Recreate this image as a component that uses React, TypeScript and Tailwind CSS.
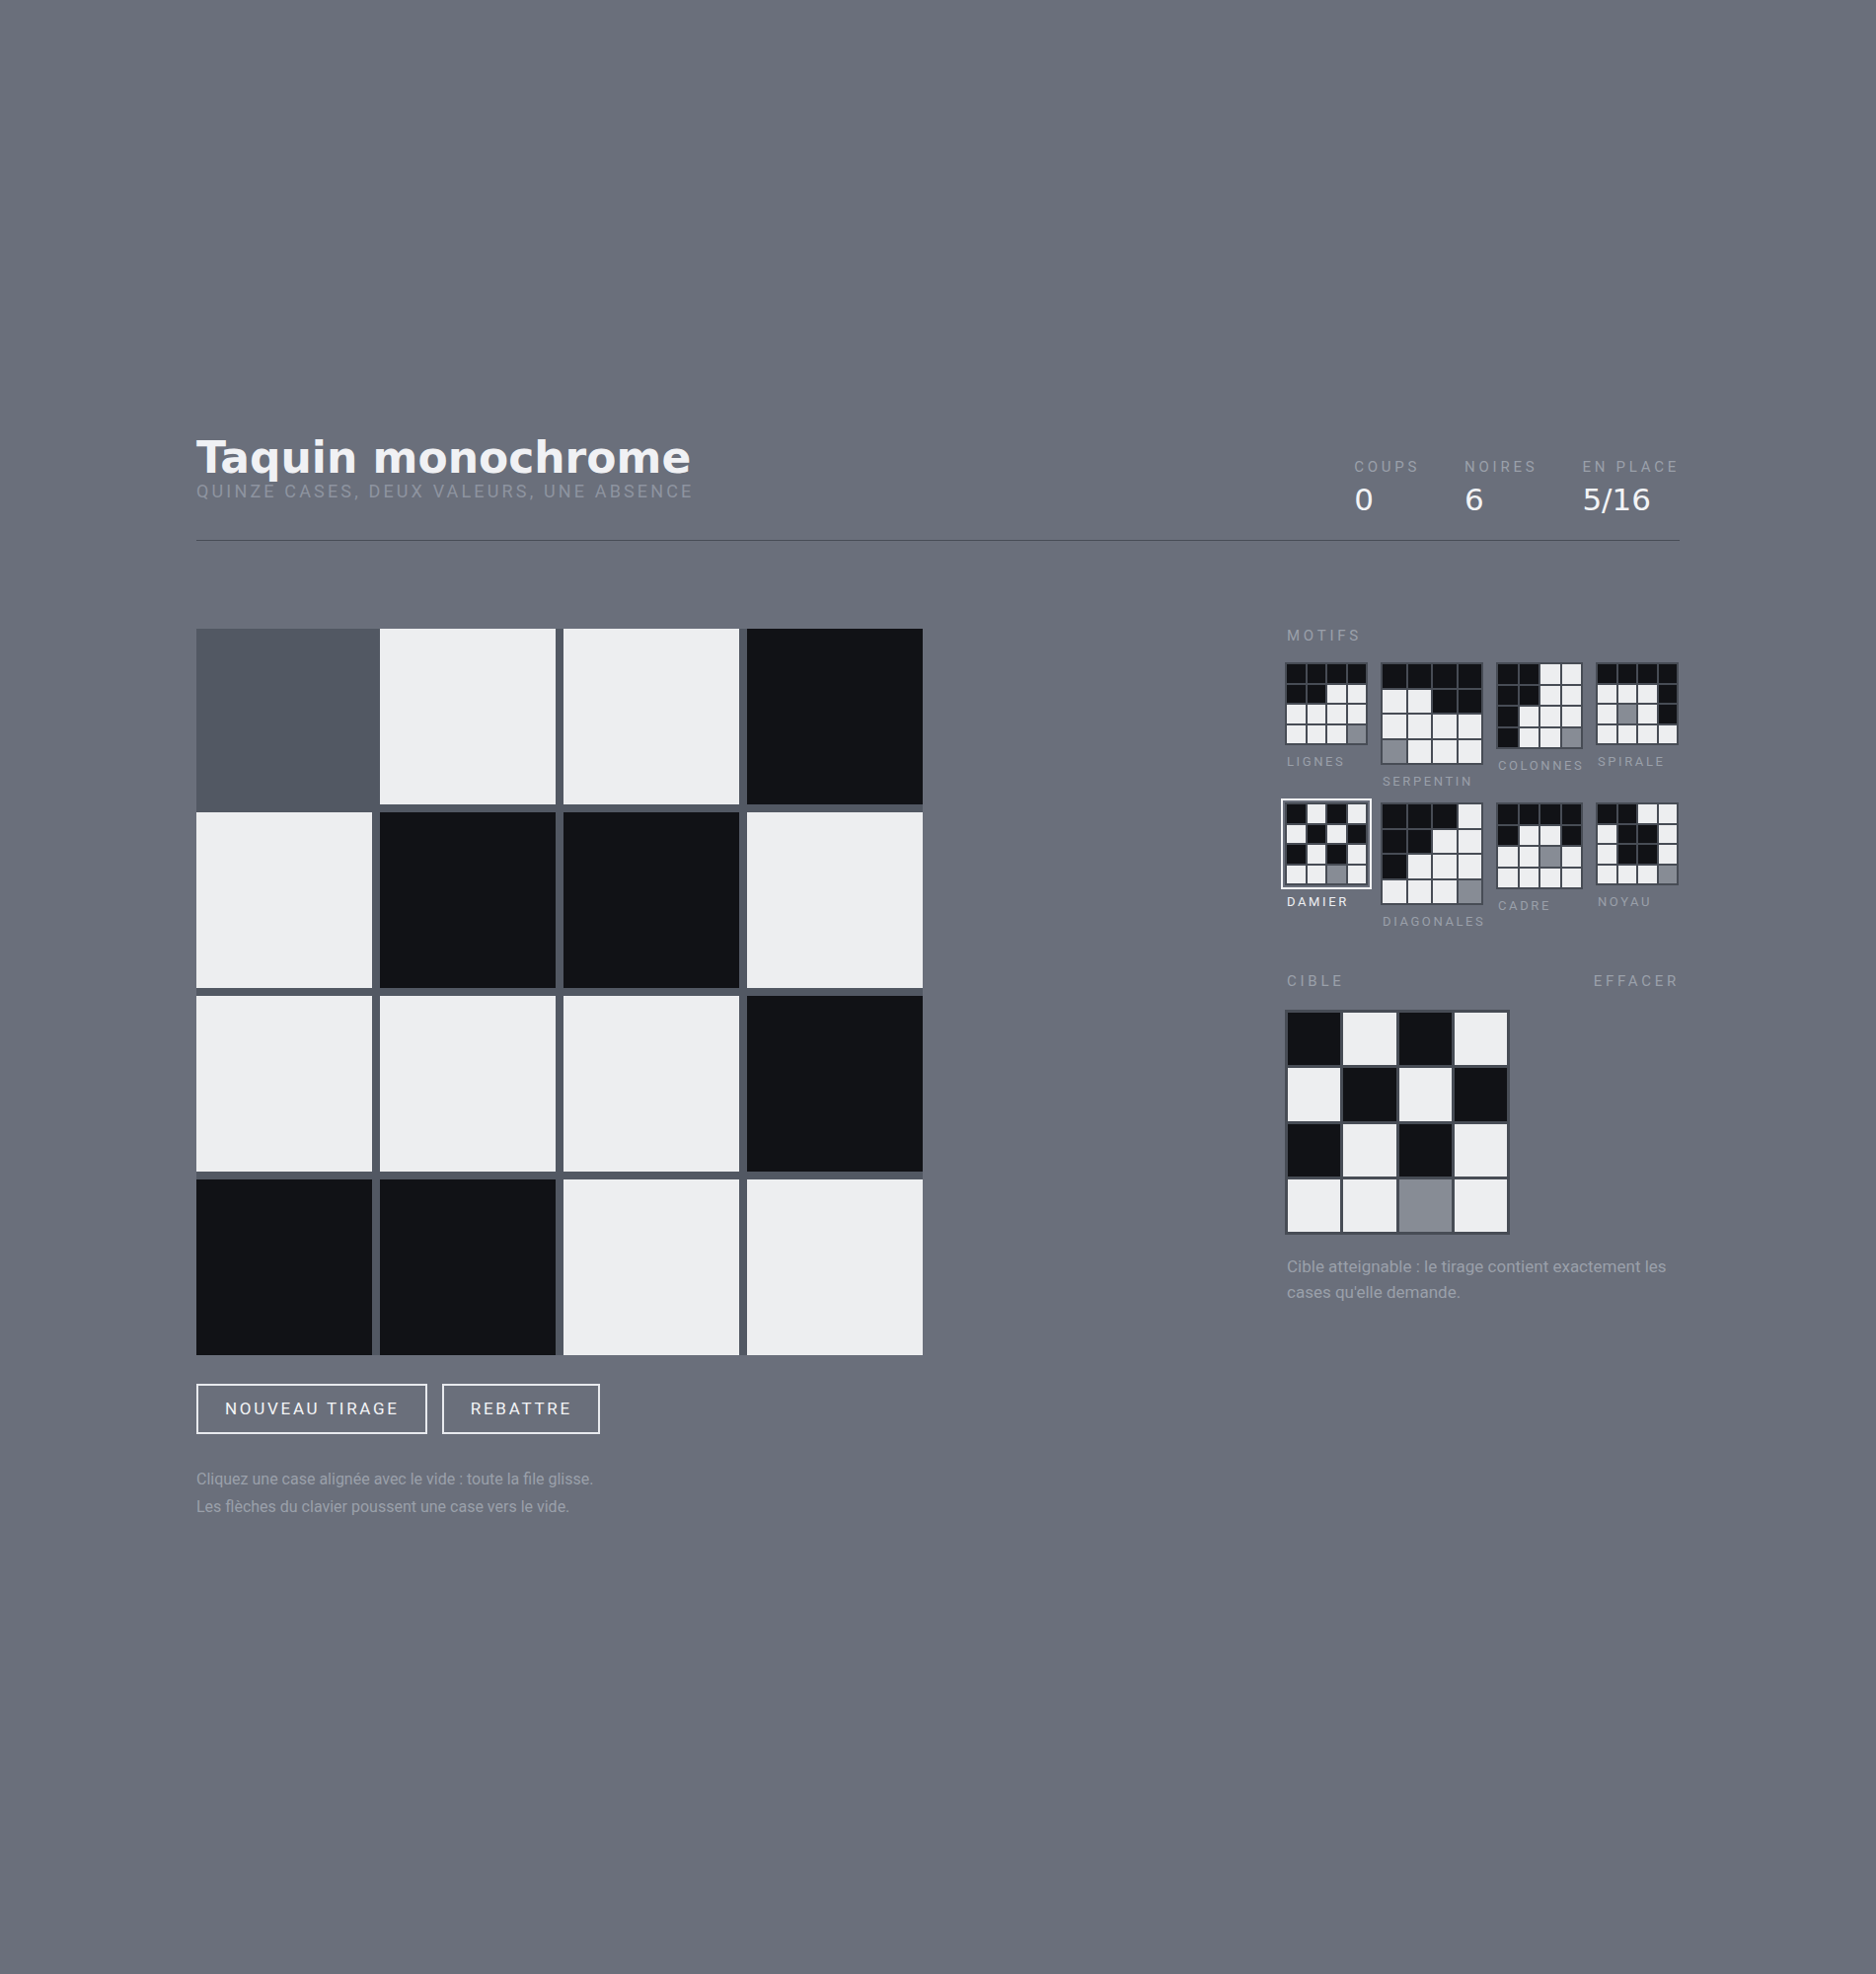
import { useState } from "react";

type Cell = 0 | 1 | 2; // 0 blanche, 1 noire, 2 vide

const parse = (s: string): Cell[] => s.split("").map((c) => (c === "B" ? 1 : c === "E" ? 2 : 0));

const MOTIFS = [
  { name: "LIGNES", size: 84, cells: parse("BBBBBBWWWWWWWWWE") },
  { name: "SERPENTIN", size: 104, cells: parse("BBBBWWBBWWWWEWWW") },
  { name: "COLONNES", size: 88, cells: parse("BBWWBBWWBWWWBWWE") },
  { name: "SPIRALE", size: 84, cells: parse("BBBBWWWBWEWBWWWW") },
  { name: "DAMIER", size: 84, cells: parse("BWBWWBWBBWBWWWEW") },
  { name: "DIAGONALES", size: 104, cells: parse("BBBWBBWWBWWWWWWE") },
  { name: "CADRE", size: 88, cells: parse("BBBBBWWBWWEWWWWW") },
  { name: "NOYAU", size: 84, cells: parse("BBWWWBBWWBBWWWWE") },
];

const START = parse("EWWBWBBWWWWBBBWW");

function MiniGrid({ cells, size }: { cells: Cell[]; size: number }) {
  return (
    <div
      className="grid grid-cols-4 gap-[2px] border-2 border-[#474c55] bg-[#474c55]"
      style={{ width: size, height: size }}
    >
      {cells.map((c, i) => (
        <div
          key={i}
          className={c === 1 ? "bg-[#111216]" : c === 2 ? "bg-[#878c95]" : "bg-[#edeef0]"}
        />
      ))}
    </div>
  );
}

export default function App() {
  const [board] = useState<Cell[]>(START);
  const [selected, setSelected] = useState(4);
  const target = MOTIFS[selected].cells;

  return (
    <div className="min-h-screen bg-[#6a6f7b] pt-[442px] font-['Roboto',sans-serif] text-[#eef0f3]">
      <div className="mx-auto w-[1503px]">
        {/* en-tête */}
        <header className="flex items-start justify-between border-b border-[#474c56] pb-[25px]">
          <div>
            <h1 className="font-['DejaVu_Sans',sans-serif] text-[44px] font-bold leading-none text-[#f0f1f4]">
              Taquin monochrome
            </h1>
            <p className="mt-[1px] text-[18px] leading-[22px] tracking-[0.175em] text-[#8e94a0]">
              QUINZE CASES, DEUX VALEURS, UNE ABSENCE
            </p>
          </div>
          <div className="mt-[21px] flex gap-[45px]">
            {[
              ["COUPS", "0"],
              ["NOIRES", "6"],
              ["EN PLACE", "5/16"],
            ].map(([label, value]) => (
              <div key={label} className="flex flex-col">
                <span className="text-[15px] leading-[20px] tracking-[0.25em] text-[#9aa0aa]">{label}</span>
                <span className="mt-[7px] font-['DejaVu_Sans',sans-serif] text-[31px] leading-[32px] text-[#f3f4f6]">
                  {value}
                </span>
              </div>
            ))}
          </div>
        </header>

        <main className="mt-[89px] flex items-start justify-between">
          {/* plateau */}
          <section>
            <div className="grid w-[736px] grid-cols-4 gap-[8px] bg-[#525863]">
              {board.map((c, i) => (
                <div
                  key={i}
                  className={`h-[178px] ${c === 1 ? "bg-[#111216]" : c === 2 ? "bg-[#525863]" : "bg-[#edeef0]"}`}
                />
              ))}
            </div>

            <div className="mt-[29px] flex gap-[15px]">
              <button className="h-[51px] border-2 border-[#e8eaee] pl-[27px] pr-[26px] text-[17px] tracking-[0.16em] text-[#f3f4f6]">
                NOUVEAU TIRAGE
              </button>
              <button className="h-[51px] border-2 border-[#e8eaee] pl-[27px] pr-[26px] text-[17px] tracking-[0.16em] text-[#f3f4f6]">
                REBATTRE
              </button>
            </div>

            <p className="mt-[32px] text-[16px] leading-[28px] text-[#9aa0aa]">
              Cliquez une case alignée avec le vide : toute la file glisse.
              <br />
              Les flèches du clavier poussent une case vers le vide.
            </p>
          </section>

          {/* motifs et cible */}
          <aside className="w-[400px]">
            <div className="pl-[2px] text-[15px] leading-[14px] tracking-[0.25em] text-[#9aa0aa]">MOTIFS</div>
            <div className="mt-[20px] flex flex-wrap gap-x-[13px] gap-y-[12px]">
              {MOTIFS.map((m, i) => (
                <button
                  key={m.name}
                  onClick={() => setSelected(i)}
                  className="flex flex-col items-start"
                  style={{ width: m.size }}
                >
                  <div className={i === selected ? "outline-2 outline-offset-2 outline-[#f3f4f6]" : ""}>
                    <MiniGrid cells={m.cells} size={m.size} />
                  </div>
                  <span
                    className={`mt-[8px] whitespace-nowrap pl-[2px] text-[13px] leading-[18px] tracking-[0.2em] ${
                      i === selected ? "text-[#eef0f3]" : "text-[#9aa0aa]"
                    }`}
                  >
                    {m.name}
                  </span>
                </button>
              ))}
            </div>

            <div className="mt-[41px] flex justify-between pl-[2px] text-[15px] leading-[20px] tracking-[0.25em] text-[#9aa0aa]">
              <span>CIBLE</span>
              <span>EFFACER</span>
            </div>
            <div className="mt-[19px] grid h-[228px] w-[228px] grid-cols-4 gap-[3px] border-[3px] border-[#474c55] bg-[#474c55]">
              {target.map((c, i) => (
                <div
                  key={i}
                  className={c === 1 ? "bg-[#111216]" : c === 2 ? "bg-[#878c95]" : "bg-[#edeef0]"}
                />
              ))}
            </div>
            <p className="mt-[19px] pl-[2px] text-[17px] leading-[26px] text-[#9aa0aa]">
              Cible atteignable : le tirage contient exactement les cases qu'elle demande.
            </p>
          </aside>
        </main>
      </div>
    </div>
  );
}
